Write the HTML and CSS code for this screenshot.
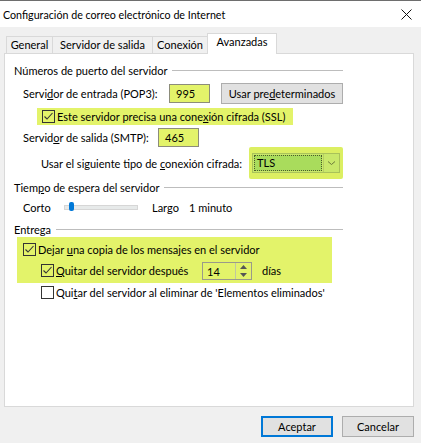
FILE: index.html
```html
<!DOCTYPE html>
<html lang="es">
<head>
    <meta charset="UTF-8">
    <title>Configuración de correo electrónico de Internet</title>
    <link rel="stylesheet" href="styles.css">
</head>
<body>

    <div class="window">
        <div class="titlebar">
            <span class="title">Configuración de correo electrónico de Internet</span>
            <svg class="close" width="11" height="11" viewBox="0 0 11 11">
                <path d="M0.5 0.5L10.5 10.5M10.5 0.5L0.5 10.5" stroke="#111" stroke-width="1" fill="none"/>
            </svg>
        </div>

        <div class="tabs">
            <div class="tab tab-general">General</div>
            <div class="tab tab-salida">Servidor de salida</div>
            <div class="tab tab-conexion">Conexión</div>
            <div class="tab tab-avanzadas active">Avanzadas</div>
        </div>

        <div class="panel">
            <div class="group-title"><span>Números de puerto del servidor</span></div>

            <div class="row row-pop3">
                <span class="lbl lbl-pop3">Servi<u>d</u>or de entrada (POP3):</span>
                <div class="field hl">995</div>
                <button class="btn btn-defaults">Usar pre<u>d</u>eterminados</button>
            </div>

            <div class="row row-ssl hl">
                <span class="check checked"><svg width="11" height="11" viewBox="0 0 11 11"><path d="M1.5 5.5L4 8L9.5 2" stroke="#333" stroke-width="1.1" fill="none"/></svg></span>
                <span>Este servidor precisa una cone<u>x</u>ión cifrada (SSL)</span>
            </div>

            <div class="row row-smtp">
                <span class="lbl lbl-smtp">Servid<u>o</u>r de salida (SMTP):</span>
                <div class="field hl">465</div>
            </div>

            <div class="row row-conn">
                <span class="lbl lbl-conn">Usar el siguiente tipo de <u>c</u>onexión cifrada:</span>
                <div class="combo-hl">
                    <div class="combo">
                        <div class="combo-value">TLS</div>
                        <div class="combo-arrow">
                            <svg width="9" height="6" viewBox="0 0 9 6"><path d="M1 1.5L4.5 4.5L8 1.5" stroke="#6b7a3a" stroke-width="1" fill="none"/></svg>
                        </div>
                    </div>
                </div>
            </div>

            <div class="group-title"><span>Tiem<u>p</u>o de espera del servidor</span></div>

            <div class="row row-slider">
                <span class="lbl lbl-corto">Corto</span>
                <div class="slider">
                    <div class="slider-track"></div>
                    <div class="slider-thumb"></div>
                </div>
                <span class="lbl lbl-largo">Largo</span>
                <span>1 minuto</span>
            </div>

            <div class="group-title group-entrega"><span>Entrega</span></div>

            <div class="entrega hl">
                <div class="row row-dejar">
                    <span class="check checked"><svg width="11" height="11" viewBox="0 0 11 11"><path d="M1.5 5.5L4 8L9.5 2" stroke="#333" stroke-width="1.1" fill="none"/></svg></span>
                    <span>Dejar <u>u</u>na copia de los mensajes en el servidor</span>
                </div>
                <div class="row row-quitar">
                    <span class="check checked"><svg width="11" height="11" viewBox="0 0 11 11"><path d="M1.5 5.5L4 8L9.5 2" stroke="#333" stroke-width="1.1" fill="none"/></svg></span>
                    <span class="lbl lbl-quitar"><u>Q</u>uitar del servidor después</span>
                    <div class="spinner">
                        <div class="spinner-value">14</div>
                        <div class="spinner-arrows">
                            <svg width="7" height="4" viewBox="0 0 7 4"><path d="M0 4L3.5 0L7 4Z" fill="#555"/></svg>
                            <svg width="7" height="4" viewBox="0 0 7 4"><path d="M0 0L3.5 4L7 0Z" fill="#555"/></svg>
                        </div>
                    </div>
                    <span class="dias">días</span>
                </div>
            </div>

            <div class="row row-eliminar">
                <span class="check"></span>
                <span>Qui<u>t</u>ar del servidor al eliminar de 'Elementos eliminados'</span>
            </div>
        </div>

        <div class="footer">
            <button class="btn btn-footer btn-default">Aceptar</button>
            <button class="btn btn-footer">Cancelar</button>
        </div>
    </div>

</body>
</html>
```

FILE: styles.css
```css
body {
    margin: 0;
    padding: 0;
    background-color: #f0f0f0;
    font-family: Lato, "Noto Sans", sans-serif;
    font-size: 11px;
    color: #000;
}

.window {
    width: 421px;
    height: 443px;
    border-top: 1px solid #6e6e6e;
    box-sizing: border-box;
}

u {
    text-decoration: underline;
    text-underline-offset: 1px;
}

/* barre de titre */
.titlebar {
    height: 26px;
    background-color: #fff;
    display: flex;
    align-items: center;
    justify-content: space-between;
    padding: 0 9px 0 3px;
}

.title {
    font-size: 10.7px;
}

/* onglets */
.tabs {
    display: flex;
    align-items: flex-end;
    height: 26px;
    padding-left: 6px;
}

.tab {
    box-sizing: border-box;
    height: 17px;
    border: 1px solid #d9d9d9;
    border-bottom: none;
    background-color: #f0f0f0;
    text-align: center;
    line-height: 15px;
    margin-left: -1px;
}

.tab-general { width: 47px; margin-left: 0; }
.tab-salida { width: 101px; }
.tab-conexion { width: 56px; }

.tab.active {
    position: relative;
    z-index: 1;
    width: 70px;
    height: 21px;
    margin-bottom: -1px;
    background-color: #fff;
    line-height: 16px;
}

.panel {
    box-sizing: border-box;
    height: 354px;
    margin: 0 7px 0 4px;
    border: 1px solid #d9d9d9;
    background-color: #fff;
    padding: 8px 0 0 9px;
}

.group-title {
    display: flex;
    align-items: center;
    width: 329px;
    height: 16px;
}

.group-title::after {
    content: "";
    flex: 1;
    border-top: 1px solid #bdbdbd;
    margin-left: 5px;
}

.row {
    display: flex;
    align-items: center;
}

.hl {
    background-color: #e3f36a;
}

.lbl {
    flex-shrink: 0;
    white-space: nowrap;
}

/* ports */
.row-pop3 {
    height: 22px;
    margin-top: 4px;
    padding-left: 9px;
}

.lbl-pop3 { width: 146px; }

.field {
    box-sizing: border-box;
    width: 41px;
    height: 19px;
    border: 1px solid #8c8c7a;
    padding-left: 6px;
    line-height: 17px;
}

.btn {
    font-family: inherit;
    font-size: 11px;
    color: #000;
    background-color: #e1e1e1;
    border: 1px solid #adadad;
    padding: 0;
    height: 21px;
}

.btn-defaults {
    width: 122px;
    margin-left: 11px;
}

.row-ssl {
    width: 256px;
    height: 17px;
    margin: 4px 0 0 23px;
    padding-left: 5px;
    box-sizing: border-box;
    white-space: nowrap;
}

.check {
    box-sizing: border-box;
    width: 13px;
    height: 13px;
    border: 1px solid #333;
    margin-right: 2px;
    flex-shrink: 0;
    display: flex;
    align-items: center;
    justify-content: center;
}

.row-smtp {
    height: 19px;
    margin-top: 3px;
    padding-left: 9px;
}

.lbl-smtp { width: 135px; }

.row-conn {
    height: 32px;
    padding-left: 27px;
}

.lbl-conn { width: 208px; }

.combo-hl {
    box-sizing: border-box;
    width: 94px;
    height: 32px;
    padding: 6px 3px;
    background-color: #dcef62;
    border-radius: 2px;
}

.combo {
    display: flex;
    height: 20px;
    border: 1px solid #a9c25a;
    box-sizing: border-box;
    background-color: #c9e86a;
}

.combo-value {
    flex: 1;
    margin: 1px;
    border: 1px dotted #4d5a2a;
    background-color: #a9dc5c;
    line-height: 14px;
    padding-left: 2px;
}

.combo-arrow {
    width: 15px;
    display: flex;
    align-items: center;
    justify-content: center;
    border-left: 1px solid #b6cf62;
}

/* délai */
.row-slider {
    height: 16px;
    margin-top: 4px;
    padding-left: 9px;
}

.lbl-corto { width: 41px; }

.slider {
    position: relative;
    width: 74px;
    height: 16px;
}

.slider-track {
    position: absolute;
    left: 0;
    right: 0;
    top: 6px;
    height: 3px;
    background-color: #e7eaea;
    border: 1px solid #d6d6d6;
}

.slider-thumb {
    position: absolute;
    left: 5px;
    top: 3px;
    width: 5px;
    height: 9px;
    background-color: #0078d7;
    border-radius: 2px;
}

.lbl-largo {
    width: 37px;
    margin-left: 14px;
}

/* livraison */
.group-entrega {
    margin-top: 6px;
}

.entrega {
    width: 315px;
    height: 46px;
    margin-left: 3px;
    padding-top: 3px;
    box-sizing: border-box;
}

.row-dejar {
    height: 19px;
    padding-left: 6px;
}

.row-quitar {
    height: 19px;
    margin-top: 2px;
    padding-left: 24px;
}

.lbl-quitar { width: 146px; }

.spinner {
    box-sizing: border-box;
    display: flex;
    width: 50px;
    height: 18px;
    border: 1px solid #9a9a8a;
}

.spinner-value {
    flex: 1;
    padding-left: 4px;
    line-height: 17px;
}

.spinner-arrows {
    width: 15px;
    display: flex;
    flex-direction: column;
    justify-content: space-around;
    align-items: center;
    border-left: 1px solid #c0c7a0;
}

.dias {
    margin-left: 10px;
}

.row-eliminar {
    height: 16px;
    margin: 1px 0 0 27px;
}

.row-eliminar .check {
    background-color: #fff;
}

/* boutons du bas */
.footer {
    display: flex;
    justify-content: flex-end;
    gap: 9px;
    padding: 9px 7px 0 0;
}

.btn-footer {
    width: 72px;
}

.btn-default {
    border-color: #0078d7;
    box-shadow: inset 0 0 0 1px #0078d7;
}
```
